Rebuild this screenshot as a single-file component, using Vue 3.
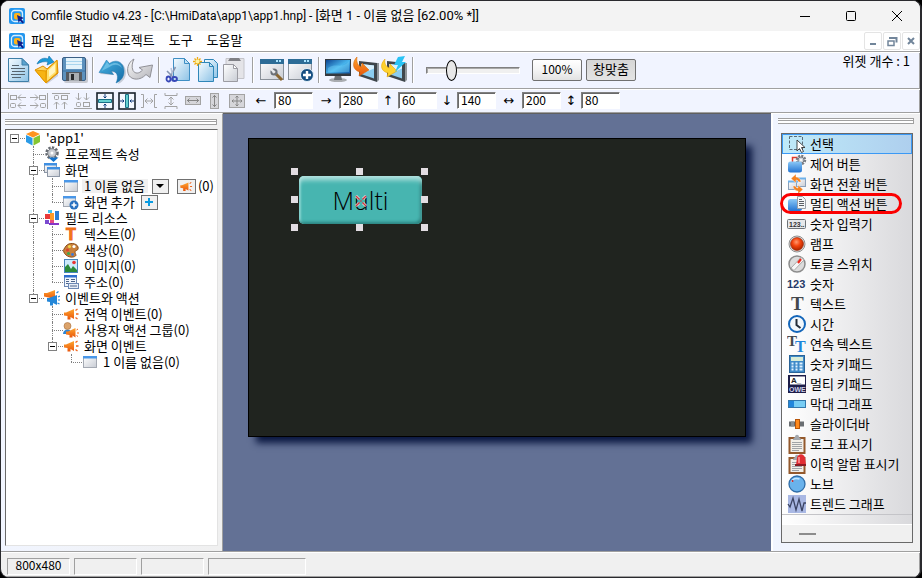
<script setup>
import { ref } from 'vue'

const menus = ['파일', '편집', '프로젝트', '도구', '도움말']

const toolGroups = [
  [['new', '새로 만들기'], ['open', '열기'], ['save', '저장']],
  [['undo', '실행 취소'], ['redo', '다시 실행']],
  [['cut', '잘라내기'], ['copy', '복사'], ['paste', '붙여넣기']],
  [['winset', '화면 속성'], ['winadd', '화면 추가']],
  [['monitor', '시뮬레이션'], ['download', '다운로드'], ['quick', '빠른 다운로드']],
]

const alignTools = [
  ['al-left', '왼쪽 맞춤'], ['al-right', '오른쪽 맞춤'], ['al-top', '위쪽 맞춤'], ['al-bottom', '아래쪽 맞춤'],
  ['al-vc', '세로 가운데'], ['al-hc', '가로 가운데'], ['sp-h', '가로 간격'], ['sp-v', '세로 간격'],
  ['sz-w', '같은 너비'], ['sz-h', '같은 높이'], ['sz-b', '같은 크기'],
]

const fields = ref([
  { id: 'left', mark: '←', wide: true, value: '80' },
  { id: 'right', mark: '→', wide: true, value: '280' },
  { id: 'top', mark: '↑', wide: false, value: '60' },
  { id: 'bottom', mark: '↓', wide: false, value: '140' },
  { id: 'width', mark: '↔', wide: true, value: '200' },
  { id: 'height', mark: '↕', wide: false, value: '80' },
])
const zoom = ref(23)

// Guide cells, left to right: e = empty, v = vertical, t = tee, l = last child, r = root
const tree = [
  { guides: 'r', open: true, icon: 't-cube', text: "'app1'" },
  { guides: 'et', icon: 't-gear', text: '프로젝트 속성' },
  { guides: 'et', open: true, icon: 't-windows', text: '화면' },
  { guides: 'evt', icon: 't-window', text: '1 이름 없음', current: true },
  { guides: 'evl', icon: 't-winadd', text: '화면 추가', add: true },
  { guides: 'et', open: true, icon: 't-blocks', text: '필드 리소스' },
  { guides: 'evt', icon: 't-text', text: '텍스트(0)' },
  { guides: 'evt', icon: 't-palette', text: '색상(0)' },
  { guides: 'evt', icon: 't-image', text: '이미지(0)' },
  { guides: 'evl', icon: 't-address', text: '주소(0)' },
  { guides: 'el', open: true, icon: 't-horns', text: '이벤트와 액션' },
  { guides: 'eet', icon: 't-horn', text: '전역 이벤트(0)' },
  { guides: 'eet', icon: 't-user', text: '사용자 액션 그룹(0)' },
  { guides: 'eel', open: true, icon: 't-horn', text: '화면 이벤트' },
  { guides: 'eeel', icon: 't-window', text: '1 이름 없음(0)' },
]

const widgets = [
  ['w-select', '선택'], ['w-control', '제어 버튼'], ['w-switch', '화면 전환 버튼'], ['w-multi', '멀티 액션 버튼'],
  ['w-numin', '숫자 입력기'], ['w-lamp', '램프'], ['w-toggle', '토글 스위치'], ['w-num', '숫자'],
  ['w-text', '텍스트'], ['w-time', '시간'], ['w-texts', '연속 텍스트'], ['w-keypad', '숫자 키패드'],
  ['w-mkeypad', '멀티 키패드'], ['w-bar', '막대 그래프'], ['w-slider', '슬라이더바'], ['w-log', '로그 표시기'],
  ['w-alarm', '이력 알람 표시기'], ['w-knob', '노브'], ['w-trend', '트렌드 그래프'],
]

// Lettering drawn on top of an icon's shapes
const glyphs = {
  't-text': [{ s: 'T', x: 3, y: 14, size: 16, fill: '#f47a1a', face: 'thick' }],
  'w-numin': [{ s: '123..', x: 2, y: 13, size: 7, fill: '#333', face: 'sans' }],
  'w-num': [{ s: '123', x: 0, y: 14, size: 11, fill: '#263a68', face: 'sans' }],
  'w-text': [{ s: 'T', x: 4, y: 16, size: 19, fill: '#45494e', face: 'serif' }],
  'w-texts': [
    { s: 'T', x: 0, y: 12, size: 15, fill: '#45494e', face: 'serif' },
    { s: 'T', x: 8, y: 18, size: 16, fill: '#1f86da', face: 'serif' },
  ],
  'w-mkeypad': [
    { s: 'A_', x: 4, y: 9, size: 8, fill: '#222', face: 'sans' },
    { s: 'OWE', x: 2, y: 18, size: 7, fill: '#cfd0e8', face: 'sans' },
  ],
}
const selected = ref(0)
const marked = 3

const handles = ['nw', 'n', 'ne', 'w', 'e', 'sw', 's', 'se']
</script>

<template>
  <div class="window">
    <svg class="defs" aria-hidden="true">
      <defs>
        <linearGradient id="gPaper" x1="0" y1="0" x2="1" y2="1"><stop offset="0" stop-color="#f4fbff" /><stop offset="1" stop-color="#8ec3e6" /></linearGradient>
        <linearGradient id="gGray" x1="0" y1="0" x2="1" y2="1"><stop offset="0" stop-color="#fafafa" /><stop offset="1" stop-color="#b4b4ba" /></linearGradient>
        <linearGradient id="gGold" x1="0" y1="0" x2="1" y2="1"><stop offset="0" stop-color="#fff2a0" /><stop offset="1" stop-color="#f4a300" /></linearGradient>
        <linearGradient id="gBlue" x1="0" y1="0" x2="0" y2="1"><stop offset="0" stop-color="#8cc9f7" /><stop offset="1" stop-color="#2474d2" /></linearGradient>
        <linearGradient id="gUndo" x1="0" y1="0" x2="1" y2="1"><stop offset="0" stop-color="#49b4e4" /><stop offset="1" stop-color="#146ba6" /></linearGradient>
        <linearGradient id="gScreen" x1="0" y1="0" x2="1" y2="1"><stop offset="0" stop-color="#0a3f8e" /><stop offset=".5" stop-color="#48b4ec" /><stop offset="1" stop-color="#0a4a9a" /></linearGradient>
        <linearGradient id="gOrange" x1="0" y1="0" x2="0" y2="1"><stop offset="0" stop-color="#ffa52e" /><stop offset="1" stop-color="#e9560c" /></linearGradient>
        <linearGradient id="gLight" x1="0" y1="0" x2="1" y2="1"><stop offset="0" stop-color="#ffffff" /><stop offset="1" stop-color="#c8ccd4" /></linearGradient>
        <radialGradient id="gLamp" cx=".45" cy=".35" r=".6"><stop offset="0" stop-color="#ff9a70" /><stop offset=".5" stop-color="#f4450f" /><stop offset="1" stop-color="#b42800" /></radialGradient>
      </defs>

      <symbol id="logo" viewBox="0 0 16 16">
        <rect width="16" height="16" rx="2" fill="#2497ee" />
        <rect x="2.500" y="2.500" width="11" height="11" rx="3" fill="none" stroke="#d8efff" stroke-width="1.300" />
        <rect x="5" y="5" width="6.500" height="6.500" rx="2" fill="#ffb21a" />
        <path d="M8 7l7 3-2.600 1.200 2.600 3-1.300 1.300-2.800-2.800L9.600 15z" fill="#10208c" />
      </symbol>

      <symbol id="new" viewBox="0 0 28 28">
        <path d="M6 4h14l6 6v17H6z" fill="#9aa6b4" opacity=".35" />
        <path d="M4.500 2.500h13.500l6.500 6.500v16.500h-20z" fill="url(#gPaper)" stroke="#3f7fa8" />
        <path d="M18 2.500V9h6.500z" fill="#5ba4d0" stroke="#3f7fa8" />
        <path d="M8 9.500h7M7 12.500h14M8 15.500h13M7 18.500h14M8 21.500h9" stroke="#56646e" />
      </symbol>
      <symbol id="open" viewBox="0 0 28 28">
        <path d="M5 17l10 11 11-8V7z" fill="#8a8f9a" opacity=".35" />
        <path d="M3 14l8-4 4 3 10-9 1 13-12 10z" fill="url(#gGold)" stroke="#d98a00" />
        <path d="M14.500 14L25 4.500V17l-11 9.500z" fill="#ffdf6a" stroke="#e59a00" />
        <path d="M17 14l6-6v8l-6 5z" fill="#fff6c4" />
        <path d="M3 14l11 1v12z" fill="#f7b414" stroke="#e59a00" />
        <path d="M5 8c2-5 7-7 11-5l1-3 5 6-7 3 1-3c-4-1-7 0-11 2z" fill="#1b9ad8" stroke="#0f6ea8" stroke-width=".6" />
      </symbol>
      <symbol id="save" viewBox="0 0 28 28">
        <rect x="4" y="3" width="24" height="24" rx="2" fill="#888" opacity=".4" />
        <rect x="2.500" y="1.500" width="23" height="23" rx="1.500" fill="#5d91bd" stroke="#3a5f85" />
        <rect x="6" y="2" width="16" height="11" fill="#e4f3fb" /><path d="M6 5.500h16M6 8.500h16" stroke="#a9d5ee" />
        <rect x="3" y="14" width="22" height="2" fill="#4b82b2" />
        <rect x="6" y="16" width="16" height="9" fill="#55595f" /><rect x="9" y="17" width="10" height="8" fill="#a9adb2" /><rect x="11" y="18" width="3" height="6" fill="#26282c" />
      </symbol>
      <symbol id="undo" viewBox="0 0 28 28">
        <path d="M2 18l8-12 3 2.500c8-5 15 0 15 8 0 6-4 10-8 11.500 3-7 0-12-6-12l2 3z" fill="#7a8490" opacity=".35" />
        <path d="M1 16.500L8.500 4l3 3.500C19 2 26.500 7 26 16c0 5-3.500 9-8 11 3-6 1.500-12-5-12l2.500 3.500z" fill="url(#gUndo)" stroke="#1c74ac" stroke-width=".5" />
        <path d="M9 6l2.500 3C17 5.500 22 7 24 12c-4-4-8-4-12.500-1L3.500 15z" fill="#9adcf6" opacity=".5" />
      </symbol>
      <symbol id="redo" viewBox="0 0 28 28">
        <path d="M8 3C2 6 0 14 3 19.500c3 4.500 11 5.500 17-1l4 3L26.500 9 13 11.500l3.500 2.500C13 18 9 18 7 14.500 5.500 11 6 7 8 3z" fill="url(#gGray)" stroke="#909096" />
      </symbol>
      <symbol id="cut" viewBox="0 0 28 28">
        <path d="M9.500 2.500h11l5 5v17h-16z" fill="url(#gPaper)" stroke="#3f8fc4" /><path d="M20.500 2.500v5h5z" fill="#c2e2f5" stroke="#3f8fc4" />
        <path d="M11.500 11l-6 11M3 15l7 7" stroke="#8696b2" stroke-width="1.600" /><path d="M7 12l1.500 6" stroke="#b8c6dc" stroke-width="1.500" />
        <ellipse cx="4.500" cy="23" rx="2" ry="2.500" fill="none" stroke="#3848b8" stroke-width="1.800" /><ellipse cx="10.500" cy="23" rx="2.500" ry="2" fill="none" stroke="#3848b8" stroke-width="1.800" />
      </symbol>
      <symbol id="copy" viewBox="0 0 28 28">
        <path d="M12.500 3.500h9l4 4v14h-13z" fill="url(#gPaper)" stroke="#2f86b8" />
        <path d="M6.500 6.500h11l4 4v15h-15z" fill="url(#gPaper)" stroke="#2f86b8" /><path d="M17.500 6.500v4h4z" fill="#c2e2f5" stroke="#2f86b8" />
        <path d="M5.500 1v9M1 5.500h9M2.500 2.500l6 6M8.500 2.500l-6 6" stroke="#f0ab10" stroke-width="1.300" /><circle cx="5.500" cy="5.500" r="2" fill="#fff3a0" />
      </symbol>
      <symbol id="paste" viewBox="0 0 28 28">
        <path d="M6 2.500h18v20H6z" fill="#e4e4e8" stroke="#c4c4ca" /><path d="M8 5l2-3h9l2 3z" fill="#808086" />
        <path d="M3.500 8.500h10l4 4v13h-14z" fill="url(#gLight)" stroke="#9b9ba2" /><path d="M13.500 8.500v4h4z" fill="#fff" stroke="#9b9ba2" />
      </symbol>
      <symbol id="winset" viewBox="0 0 28 28">
        <rect x="2.500" y="3.500" width="23" height="20" fill="url(#gLight)" stroke="#8a9199" /><rect x="2" y="3" width="24" height="5" fill="#2d6c96" /><path d="M18 5h2M21 5h2" stroke="#a9e3ff" stroke-width="2" />
        <path d="M17 17l7 7" stroke="#8a6630" stroke-width="3" /><circle cx="16" cy="16" r="2.600" fill="none" stroke="#6b7178" stroke-width="2" /><path d="M12.500 12.500L16 16" stroke="#e9ebee" stroke-width="2.400" />
      </symbol>
      <symbol id="winadd" viewBox="0 0 28 28">
        <rect x="2.500" y="3.500" width="23" height="20" fill="url(#gLight)" stroke="#8a9199" /><rect x="2" y="3" width="24" height="5" fill="#2d6c96" /><path d="M18 5h2M21 5h2" stroke="#a9e3ff" stroke-width="2" />
        <circle cx="21" cy="19" r="6.500" fill="#164f82" stroke="#e8f3fa" /><path d="M21 15v8M17 19h8" stroke="#fff" stroke-width="2.400" />
      </symbol>
      <symbol id="monitor" viewBox="0 0 28 28">
        <ellipse cx="14" cy="24" rx="9" ry="2" fill="#a9acb0" /><path d="M11 19h6l1 5h-8z" fill="#6d7176" />
        <rect x="1.500" y="3.500" width="25" height="16" fill="url(#gScreen)" stroke="#34393f" />
        <path d="M2 18.500h24" stroke="#34393f" stroke-width="2" /><path d="M4 12c8-6 14 2 21-7v11H4z" fill="#7ddcff" opacity=".35" />
      </symbol>
      <symbol id="screenTilt" viewBox="0 0 28 28">
        <path d="M7 5l18 2v19L7 20z" fill="#3f464c" /><path d="M25 7l2 0v17l-2 2z" fill="#90969b" />
        <path d="M9 8l13 1.500v13L9 18z" fill="#8ccdf0" /><path d="M9 8l13 1.500v3L9 18z" fill="#d9f1ff" />
      </symbol>
      <symbol id="download" viewBox="0 0 28 28">
        <use href="#screenTilt" />
        <path d="M5 1c-5 5-5 13 3 15l-1 4 10-6-7-7-.5 4C6 10 4 6 5 1z" fill="url(#gOrange)" stroke="#d96a0a" stroke-width=".6" />
      </symbol>
      <symbol id="quick" viewBox="0 0 28 28">
        <use href="#screenTilt" />
        <path d="M5 3c-5 5-5 12 3 14l-1 4 10-6-7-7-.500 4C6 11 4 7 5 3z" fill="#ffd22e" stroke="#e9a80a" stroke-width=".6" />
        <path d="M18 1l7-1-3 6h4L15 16l3-7h-4z" fill="#29c3f5" />
      </symbol>

      <symbol id="al-left" viewBox="0 0 20 20"><path d="M1.500 2v16M19 6.500h-8M14 3.500l-3 3 3 3M19 14.500h-8M14 11.500l-3 3 3 3" /><rect x="3.500" y="4.500" width="6" height="4" /><rect x="3.500" y="12.500" width="5" height="4" rx="1" /></symbol>
      <symbol id="al-right" viewBox="0 0 20 20"><path d="M18.500 2v16M1 6.500h8M6 3.500l3 3-3 3M1 14.500h8M6 11.500l3 3-3 3" /><rect x="10.500" y="4.500" width="6" height="4" /><rect x="11.500" y="12.500" width="5" height="4" rx="1" /></symbol>
      <symbol id="al-top" viewBox="0 0 20 20"><path d="M1 2.500h18M5.500 18v-7M3 13.500L5.500 11 8 13.500M13.500 18v-7M11 13.500l2.500-2.500 2.500 2.500" /><rect x="3.500" y="4.500" width="4" height="4" rx="1" /><rect x="10.500" y="4.500" width="6" height="4" /></symbol>
      <symbol id="al-bottom" viewBox="0 0 20 20"><path d="M1 17.500h18M5.500 2v7M3 6.500L5.500 9 8 6.500M13.500 2v7M11 6.500L13.500 9 16 6.500" /><rect x="3.500" y="11.500" width="4" height="4" rx="1" /><rect x="10.500" y="11.500" width="6" height="4" /></symbol>
      <symbol id="al-vc" viewBox="0 0 20 20"><rect x="2" y="2" width="16" height="16" fill="#f4f8ff" stroke="#18222c" stroke-width="1.600" /><path d="M3.500 8.500h13v3h-13z" fill="#65d0d0" stroke="#1a6f86" /><path d="M10 3v4M8.500 5.500L10 7l1.500-1.500M10 17v-4M8.500 14.500L10 13l1.500 1.500" stroke="#123c7c" /></symbol>
      <symbol id="al-hc" viewBox="0 0 20 20"><rect x="2" y="2" width="16" height="16" fill="#f4f8ff" stroke="#18222c" stroke-width="1.600" /><path d="M8.500 3.500h3v13h-3z" fill="#65d0d0" stroke="#1a6f86" /><path d="M3 10h4M5.500 8.500L7 10l-1.500 1.500M17 10h-4M14.500 8.500L13 10l1.500 1.500" stroke="#123c7c" /></symbol>
      <symbol id="sp-h" viewBox="0 0 20 20"><path d="M2 3.500h2.500v13H2M18 3.500h-2.500v13H18M6 10h8M8.500 7.500L6 10l2.500 2.500M11.500 7.500L14 10l-2.500 2.500" /></symbol>
      <symbol id="sp-v" viewBox="0 0 20 20"><path d="M4 2v2.500h12V2M4 18v-2.500h12V18M10 6v8M7.500 8.500L10 6l2.500 2.500M7.500 11.500L10 14l2.500-2.500" /></symbol>
      <symbol id="sz-w" viewBox="0 0 20 20"><rect x="2.500" y="5.500" width="15" height="8" fill="#d6d6da" /><path d="M4 9.500h12M6.500 7.500l-2 2 2 2M13.500 7.500l2 2-2 2" stroke="#858585" /></symbol>
      <symbol id="sz-h" viewBox="0 0 20 20"><rect x="5.500" y="2.500" width="8" height="15" fill="#d6d6da" /><path d="M9.500 4v12M7.500 6.500l2-2 2 2M7.500 13.500l2 2 2-2" stroke="#858585" /></symbol>
      <symbol id="sz-b" viewBox="0 0 20 20"><rect x="2.500" y="3.500" width="15" height="13" fill="#d6d6da" /><path d="M10 5v10M8.500 6.500L10 5l1.500 1.500M8.500 13.500L10 15l1.500-1.500M5 10h10M6.500 8.500L5 10l1.500 1.500M13.500 8.500L15 10l-1.500 1.500" stroke="#858585" /></symbol>

      <symbol id="t-cube" viewBox="0 0 16 16"><path d="M8 1l7 3-7 3.500L1 4z" fill="#ff9420" /><path d="M1 5l6.500 3v7.500L1 12z" fill="#2b9be6" /><path d="M15 5L8.500 8v7.500L15 12z" fill="#86c632" /></symbol>
      <symbol id="t-gear" viewBox="0 0 16 16"><circle cx="8" cy="7" r="5.500" fill="none" stroke="#666b72" stroke-width="2.500" stroke-dasharray="2.300 1.300" /><circle cx="8" cy="7" r="4.300" fill="#c9ccd1" stroke="#7a7e84" /><circle cx="8" cy="7" r="1.500" fill="#fff" /><path d="M4.500 11.500h10l-5 4.500z" fill="#1272cc" /></symbol>
      <symbol id="t-window" viewBox="0 0 16 16"><rect x="1.500" y="2.500" width="13" height="11" fill="url(#gLight)" stroke="#a4a9b2" /><rect x="1" y="2" width="14" height="2.500" fill="#4a97e8" /></symbol>
      <symbol id="t-windows" viewBox="0 0 16 16"><rect x=".5" y="1.500" width="12" height="9" fill="url(#gLight)" stroke="#8d97a6" /><rect x="0" y="1" width="13" height="2.500" fill="#3f8fe2" /><rect x="3.500" y="5.500" width="12" height="9" fill="url(#gLight)" stroke="#8d97a6" /><rect x="3" y="5" width="13" height="2.500" fill="#3f8fe2" /></symbol>
      <symbol id="t-winadd" viewBox="0 0 16 16"><rect x=".5" y="2.500" width="12" height="10" fill="url(#gLight)" stroke="#a4a9b2" /><rect x="0" y="2" width="13" height="2.500" fill="#4a97e8" /><circle cx="11" cy="11" r="4.500" fill="#2870c0" /><path d="M11 8.500v5M8.500 11h5" stroke="#fff" stroke-width="1.600" /></symbol>
      <symbol id="t-blocks" viewBox="0 0 16 16"><rect x="4" y="0" width="4" height="3" fill="#43c4f2" /><rect x="1" y="4" width="5" height="5" fill="#e83a3a" /><rect x="6" y="3" width="4" height="7" fill="#ff9b2a" /><rect x="11" y="1" width="4" height="9" fill="#2c7fd6" /><rect x="1" y="10" width="4" height="4" fill="#7a4ad0" /><rect x="6" y="10" width="4" height="3" fill="#e64a86" /><rect x="5" y="13" width="10" height="2" fill="#8436c8" /></symbol>
      <symbol id="t-palette" viewBox="0 0 16 16"><path d="M3 4c3-4 11-3 12 1s-3 3-3 5 3 4-2 5S-1 11 1 7z" fill="#c9803c" stroke="#8c4e1a" /><circle cx="4.500" cy="8" r="1.500" fill="#e04030" /><circle cx="6.500" cy="4.500" r="1.500" fill="#f3d84a" /><circle cx="11" cy="4.500" r="1.600" fill="#fff" /><circle cx="5.500" cy="11.500" r="1.500" fill="#3fa64c" /><circle cx="9.500" cy="12.500" r="1.400" fill="#3c78d8" /></symbol>
      <symbol id="t-image" viewBox="0 0 16 16"><rect x="1.500" y="1.500" width="13" height="13" fill="#cdeafc" stroke="#4886bc" /><path d="M2 14V9l3-3 3 5 2-3 4 4v2z" fill="#2c8a3a" /><circle cx="11" cy="4.500" r="1.800" fill="#e83434" /></symbol>
      <symbol id="t-address" viewBox="0 0 16 16"><rect x="1.500" y="1.500" width="12" height="11" fill="#f2f6fb" stroke="#6c88b4" /><rect x="1" y="1" width="13" height="2.500" fill="#2f6ed0" /><path d="M3 5.500h3M8 5.500h4M3 7.500h3M8 7.500h4M3 9.500h3" stroke="#4c648c" /><rect x="5.500" y="9.500" width="10" height="5" fill="#e6edf7" stroke="#6c88b4" /><path d="M7 12h7" stroke="#4c648c" /></symbol>
      <symbol id="t-horn" viewBox="0 0 16 16"><path d="M1 6.500h2L11 3v10l-3.500-2v2.500h-3V10L1 9.500z" fill="url(#gOrange)" /><path d="M12.500 4.500l2-1.500M13 8h2.500M12.500 11.500l2 1.500" stroke="#f0641a" stroke-width="1.300" /></symbol>
      <symbol id="t-horns" viewBox="0 0 16 16"><path d="M0 3h3l8-3v9L0 6.500z" fill="url(#gOrange)" /><path d="M3 8h2l8-3v10l-4-2v2.500H6V12l-3-.500z" fill="#2487d8" /><path d="M12.500 3l2-1.500M14 7l2-1M14 10h2M13.500 13l2 1" stroke="#2487d8" stroke-width="1.200" /></symbol>
      <symbol id="t-user" viewBox="0 0 16 16"><path d="M0 12c0-6 9-6 9 0z" fill="#2d85d4" /><circle cx="4.500" cy="4" r="3.500" fill="#dca36a" stroke="#a8713c" stroke-width=".6" /><path d="M3 9.500h2L12.500 6v9.500l-3-2v2H6.500V13L3 12.500z" fill="url(#gOrange)" /><path d="M13.500 8l1.500-1M14 11h2M13.500 13.500l1.500 1" stroke="#f0641a" /></symbol>

      <symbol id="w-select" viewBox="0 0 20 20"><rect x="2.500" y="2.500" width="13" height="13" fill="none" stroke="#5a6a76" stroke-dasharray="3 1.500" /><path d="M10 6v11l2.500-2.500 2 4 2-1-2-4H18z" fill="#fff" stroke="#333" stroke-width=".9" /></symbol>
      <symbol id="w-control" viewBox="0 0 20 20"><path d="M5.500 8V3.500h5" fill="none" stroke="#e03a2a" stroke-width="1.500" /><circle cx="14" cy="6" r="4" fill="none" stroke="#777b82" stroke-width="2.500" stroke-dasharray="2 1.100" /><circle cx="14" cy="6" r="3" fill="#cfd2d6" stroke="#777b82" /><circle cx="14" cy="6" r="1" fill="#fff" /><rect x="1" y="7.500" width="14" height="11" rx="2.500" fill="url(#gBlue)" /></symbol>
      <symbol id="w-switch" viewBox="0 0 20 20"><rect x="1.500" y="7.500" width="10" height="8" fill="url(#gLight)" stroke="#8aa0ba" /><rect x="9.500" y="4.500" width="9" height="8" fill="url(#gLight)" stroke="#8aa0ba" /><path d="M1 7.500h10M10 4.500h9" stroke="#6eb1ea" stroke-width="2" /><path d="M14 8c0-3-3-5-5-5V0L4 4.500 9 9V6c1.500 0 2.500 1 2.500 2zM6 12c0 3 3 5 5 5v3l5-4.500L11 11v3c-1.500 0-2.500-1-2.500-2z" fill="#f4811f" stroke="#fff" stroke-width=".4" /></symbol>
      <symbol id="w-multi" viewBox="0 0 20 20"><rect x="1" y="5" width="14" height="12" rx="2.500" fill="url(#gBlue)" /><path d="M10.500 2.500h5l3 3v9h-8z" fill="#f4f6f8" stroke="#9aa0a8" /><path d="M12 5.500h3M12 7.500h5M12 9.500h5M12 11.500h5" stroke="#5c6066" /></symbol>
      <symbol id="w-numin" viewBox="0 0 20 20"><rect x=".5" y="5.500" width="18" height="9" rx="1" fill="#e6e8ea" stroke="#6e7378" /></symbol>
      <symbol id="w-lamp" viewBox="0 0 20 20"><circle cx="10" cy="10" r="8" fill="#e3e3e3" stroke="#909090" /><circle cx="10" cy="10" r="6.500" fill="url(#gLamp)" stroke="#8e2a10" stroke-width=".6" /></symbol>
      <symbol id="w-toggle" viewBox="0 0 20 20"><circle cx="10" cy="10" r="8" fill="#dcdcdc" stroke="#8c8c8c" stroke-width="1.500" /><path d="M14 3.500L17 6 7 16.500 4 14z" fill="#f6f6f6" stroke="#aaa" /><path d="M11 9l3-4" stroke="#ee2a1c" stroke-width="2.200" /></symbol>
      <symbol id="w-time" viewBox="0 0 20 20"><circle cx="10" cy="10" r="8" fill="#f2f7fb" stroke="#1466ba" stroke-width="2" /><path d="M9.500 5v6l4 3" fill="none" stroke="#222c38" stroke-width="2" /></symbol>
      <symbol id="w-keypad" viewBox="0 0 20 20"><rect x="2.500" y="1.500" width="15" height="17" fill="#3f8ac8" stroke="#2a6397" /><rect x="4" y="3" width="12" height="4" fill="#d9ecd8" /><path d="M4.500 9.500h2M8.500 9.500h2M12.500 9.500h3M4.500 12.500h2M8.500 12.500h2M12.500 12.500h3M4.500 15.500h2M8.500 15.500h2M12.500 15.500h3" stroke="#dff1ff" stroke-width="2" /></symbol>
      <symbol id="w-mkeypad" viewBox="0 0 20 20"><rect x="1" y="1" width="18" height="18" fill="#1d1d48" /><rect x="3" y="2.500" width="15" height="8" fill="#fff" /></symbol>
      <symbol id="w-bar" viewBox="0 0 20 20"><rect x="1.500" y="6.500" width="17" height="7" fill="#78cdf4" stroke="#3478ac" /><rect x="2" y="7" width="5" height="6" fill="#2286dc" /></symbol>
      <symbol id="w-slider" viewBox="0 0 20 20"><rect x="2" y="7.500" width="15" height="5" fill="#6a6e72" /><rect x="4" y="7.500" width="3" height="5" fill="#8b8f93" /><rect x="8.500" y="5.500" width="4" height="9" fill="#ff8a1e" stroke="#b8560a" /></symbol>
      <symbol id="w-log" viewBox="0 0 20 20"><rect x="2.500" y="4" width="15" height="15" fill="#f2efe9" stroke="#94592c" stroke-width="2" /><path d="M6 5l2-2c0-3 4-3 4 0l2 2v1H6z" fill="#a4a8ad" /><path d="M5 8.500h10M5 10.500h10M5 12.500h10M5 14.500h10M5 16.500h7" stroke="#8b9096" stroke-width=".8" /></symbol>
      <symbol id="w-alarm" viewBox="0 0 20 20"><use href="#w-log" /><path d="M9 11l1-7c1-5 7-5 8 0l1 7z" fill="#e22d33" /><path d="M12 3v6" stroke="#ff9a9a" stroke-width="1.500" /><rect x="8" y="10" width="11" height="2" fill="#8b1b22" /></symbol>
      <symbol id="w-knob" viewBox="0 0 20 20"><circle cx="10" cy="10" r="8" fill="#69b2ec" stroke="#2f6da8" stroke-width="1.300" /><path d="M4.500 8c1-3 4-4.500 8-3" stroke="#c4e6ff" fill="none" stroke-width="1.500" /><circle cx="5.500" cy="7" r="1" fill="#c22" /></symbol>
      <symbol id="w-trend" viewBox="0 0 20 20"><rect x="1" y="1" width="18" height="18" fill="#a9b8e4" /><path d="M1 10l2 3 3-9 3 12 3-11 3 12 2-8h2" fill="none" stroke="#3b4464" stroke-width="1.300" /></symbol>
    </svg>

    <header class="titlebar">
      <svg class="i16"><use href="#logo" /></svg>
      <h1>Comfile Studio v4.23 - [C:\HmiData\app1\app1.hnp] - <span class="doc">[화면 1 - 이름 없음 [62.00% *]]</span></h1>
      <div class="caption">
        <button aria-label="최소화"><svg viewBox="0 0 12 12"><path d="M1 6.500h10" /></svg></button>
        <button aria-label="최대화"><svg viewBox="0 0 12 12"><rect x="1.500" y="1.500" width="9" height="9" rx="1" /></svg></button>
        <button aria-label="닫기"><svg viewBox="0 0 12 12"><path d="M1 1l10 10M11 1L1 11" /></svg></button>
      </div>
    </header>

    <nav class="menubar">
      <svg class="i16"><use href="#logo" /></svg>
      <button v-for="m in menus" :key="m" class="menu">{{ m }}</button>
      <div class="child-caption">
        <button aria-label="창 최소화"><svg viewBox="0 0 12 12"><path d="M3 9h6" /></svg></button>
        <button aria-label="창 복원"><svg viewBox="0 0 12 12"><path d="M4 3h6.500v4.500M4 2v2" /><rect x="2" y="6" width="6" height="4.500" stroke-width="1.500" /></svg></button>
        <button aria-label="창 닫기"><svg viewBox="0 0 12 12"><path d="M3 3l6 6M9 3L3 9" /></svg></button>
      </div>
    </nav>

    <div class="toolbar">
      <template v-for="(g, gi) in toolGroups" :key="gi">
        <button v-for="t in g" :key="t[0]" class="tool" :aria-label="t[1]"><svg><use :href="'#' + t[0]" /></svg></button>
        <span class="sep"></span>
      </template>
      <input v-model="zoom" class="zoom" type="range" min="0" max="100" aria-label="확대 비율">
      <button class="push">100%</button>
      <button class="push on">창맞춤</button>
      <p class="count">위젯 개수 : 1</p>
    </div>

    <div class="alignbar">
      <button v-for="a in alignTools" :key="a[0]" class="align" :aria-label="a[1]"><svg><use :href="'#' + a[0]" /></svg></button>
      <template v-for="f in fields" :key="f.id">
        <label :for="f.id" :class="{ wide: f.wide }">{{ f.mark }}</label>
        <input :id="f.id" v-model="f.value" type="text">
      </template>
    </div>

    <main>
      <aside class="left">
        <div class="grip"></div>
        <ul class="tree">
          <li v-for="(n, i) in tree" :key="i">
            <span v-for="(c, k) in n.guides" :key="k" class="guide" :class="'g-' + c">
              <button v-if="n.open && k === n.guides.length - 1" class="expander" :aria-label="n.text + ' 접기'"></button>
            </span>
            <svg class="i16" viewBox="0 0 16 16">
              <use :href="'#' + n.icon" />
              <text v-for="(g, gi) in glyphs[n.icon]" :key="gi" :class="g.face" :x="g.x" :y="g.y" :font-size="g.size" :fill="g.fill">{{ g.s }}</text>
            </svg>
            <span class="node" :class="{ current: n.current }">{{ n.text }}</span>
            <template v-if="n.current">
              <button class="mini" aria-label="화면 메뉴"><svg viewBox="0 0 12 12"><path d="M2 4h8L6 8z" fill="#000" /></svg></button>
              <button class="mini horn" aria-label="화면 이벤트"><svg viewBox="0 0 16 16"><use href="#t-horn" /></svg></button>
              <span class="tail">(0)</span>
            </template>
            <button v-if="n.add" class="mini" aria-label="화면 추가"><svg viewBox="0 0 12 12"><path d="M6 2v8M2 6h8" stroke="#0a9be0" stroke-width="2" /></svg></button>
          </li>
        </ul>
      </aside>

      <section class="workspace">
        <div class="screen">
          <div class="widget">
            <span>Multi</span>
            <svg class="center" viewBox="0 0 12 12"><path d="M1 1l3 3M11 1L8 4M1 11l3-3M11 11L8 8" stroke="#fff" stroke-width="2.500" /><path d="M1 1l3.500 3.500M11 1L7.500 4.500M1 11l3.500-3.500M11 11L7.500 7.500" stroke="#c83c46" stroke-width="1.600" /><path d="M5 6h2" stroke="#c83c46" /></svg>
            <i v-for="h in handles" :key="h" class="handle" :class="h"></i>
          </div>
        </div>
      </section>

      <aside class="right">
        <div class="grip"></div>
        <div class="palette">
          <ul>
            <li v-for="(w, i) in widgets" :key="w[0]">
              <button :class="{ selected: i === selected, marked: i === marked }" @click="selected = i">
                <svg viewBox="0 0 20 20">
                  <use :href="'#' + w[0]" />
                  <text v-for="(g, gi) in glyphs[w[0]]" :key="gi" :class="g.face" :x="g.x" :y="g.y" :font-size="g.size" :fill="g.fill">{{ g.s }}</text>
                </svg>
                <span>{{ w[1] }}</span>
              </button>
            </li>
          </ul>
          <div class="ledge"></div>
          <div class="foot"><span></span></div>
        </div>
      </aside>
    </main>

    <footer>
      <span class="cell">800x480</span>
      <span class="cell"></span>
      <span class="cell"></span>
      <span class="cell long"></span>
    </footer>
  </div>
</template>

<style>
body { background: #000; }
</style>

<style scoped>
*, *::before, *::after { box-sizing: border-box; }
.window {
  display: flex;
  flex-direction: column;
  min-height: 100vh;
  border: 1px solid #2a2a2e;
  border-right-width: 2px;
  border-radius: 9px;
  overflow: hidden;
  background: #f0f0f0;
  color: #000;
  font: 13px/16px "Noto Sans CJK KR", sans-serif;
}
.defs { position: absolute; width: 0; height: 0; }
button { border: 0; padding: 0; background: none; font: inherit; color: inherit; }
ul { list-style: none; margin: 0; padding: 0; }
svg { display: block; flex: none; }
.i16 { width: 16px; height: 16px; }
.sans { font-family: "Liberation Sans", sans-serif; font-weight: 700; }
.serif { font-family: "Liberation Serif", serif; font-weight: 700; }
.thick { font-family: "Liberation Sans", sans-serif; font-weight: 700; stroke: #f06a14; stroke-width: 1; }

.titlebar { display: flex; align-items: center; height: 30px; padding-left: 8px; background: #f3f3f3; }
.titlebar h1 { margin: 0 0 0 6px; flex: 1; font: 400 12px/16px Roboto, "Noto Sans CJK KR", sans-serif; white-space: nowrap; }
.titlebar .doc { font-size: 13px; }
.caption { display: flex; }
.caption button { display: flex; justify-content: center; align-items: center; width: 46px; height: 30px; }
.caption svg { width: 12px; height: 12px; fill: none; stroke: #000; }

.menubar { display: flex; align-items: center; height: 20px; padding-left: 8px; background: #fff; }
.menubar .menu { margin-right: 6px; padding: 0 4px 2px; line-height: 18px; }
.menubar .i16 { margin-right: 2px; }
.child-caption { display: flex; gap: 1px; margin-left: auto; }
.child-caption button { width: 18px; height: 18px; padding: 2px; border: 1px solid #e4e4e4; border-radius: 2px; }
.child-caption svg { width: 12px; height: 12px; fill: none; stroke: #71859a; stroke-width: 2; }

.toolbar, .alignbar { display: flex; align-items: center; background: #f1f4ff; border-top: 1px solid #a0a0a0; box-shadow: inset 0 1px #fff, inset -1px 0 #a0a0a0; }
.toolbar { height: 37px; padding-left: 3px; }
.tool, .tool svg { width: 28px; height: 28px; }
.sep { width: 2px; height: 26px; margin: 0 4px; border-left: 1px solid #a0a0a0; border-right: 1px solid #fff; }
.zoom { appearance: none; width: 94px; height: 22px; margin: 0 12px 0 8px; background: none; }
.zoom::-webkit-slider-runnable-track { height: 7px; border: 1px solid; border-color: #808080 #fff #fff #808080; box-shadow: inset 1px 1px #a8a8a8; background: #f0f0f0; }
.zoom::-webkit-slider-thumb { appearance: none; width: 11px; height: 21px; margin-top: -8px; border: 1px solid #000; border-radius: 50%; background: #e8e8e8; }
.push { width: 50px; height: 22px; margin-right: 4px; padding-bottom: 2px; border: 1px solid #707070; border-radius: 2px; background: linear-gradient(#fff, #f4f4f4 50%, #e2e2e2); font-size: 12px; line-height: 18px; }
.push.on { background: linear-gradient(#d6d6d6, #e4e4e4); font-size: 13px; }
.count { align-self: flex-start; margin: 1px 10px 0 auto; }

.alignbar { height: 25px; padding-left: 5px; border-bottom: 1px solid #a0a0a0; }
.align { width: 22px; height: 20px; }
.align svg { width: 20px; height: 20px; margin: 0 auto; fill: none; stroke: #a3a3a3; stroke-width: 1; }
.alignbar label { width: 20px; text-align: center; font: 13px/18px "DejaVu Sans", sans-serif; }
.alignbar label.wide { width: 26px; }
.alignbar input { width: 39px; height: 17px; padding: 0 3px 2px; border: 1px solid; border-color: #808080 #fff #fff #808080; box-shadow: inset 1px 1px #696969; background: #fff; font: inherit; font-size: 12px; border-radius: 0; }

main { display: flex; flex: 1; }
.left, .right { display: flex; flex-direction: column; border-top: 1px solid #fff; background: linear-gradient(90deg, #f1f5ff, #f0f0f0); }
.left { width: 222px; padding: 5px 4px; border-right: 1px solid #a0a0a0; }
.grip { flex: none; height: 6px; margin-right: 1px; border: 1px solid #a0a0a0; border-left: 0; background: linear-gradient(#fff 1px, #a0a0a0 1px 2px, #fff 2px 4px); }
.tree { flex: 1; margin-top: 4px; border: 1px solid; border-color: #696969 #e3e3e3 #e3e3e3 #696969; background: #fff; }
.tree li { display: flex; align-items: center; height: 16px; }
.guide { position: relative; flex: none; width: 19px; height: 16px; }
.g-v::before, .g-t::before, .g-l::before { content: ""; position: absolute; left: 8px; top: 0; height: 16px; border-left: 1px dotted #808080; }
.g-l::before { height: 8px; }
.g-t::after, .g-l::after, .g-r::after { content: ""; position: absolute; left: 8px; right: 0; top: 8px; border-top: 1px dotted #808080; }
.expander { position: absolute; z-index: 1; left: 4px; top: 4px; width: 9px; height: 9px; border: 1px solid #808080; background: linear-gradient(#000, #000) center / 5px 1px no-repeat #fff; }
.node { margin-left: 3px; padding: 0 2px; line-height: 14px; white-space: nowrap; }
.node.current { background: #f0f0f0; padding-right: 3px; }
.mini { display: flex; justify-content: center; align-items: center; width: 17px; height: 15px; margin-left: 4px; border: 1px solid #707070; background: #f0f0f0; }
.mini svg { width: 12px; height: 12px; }
.mini.horn { width: 19px; margin-left: 8px; }
.mini.horn svg { width: 16px; height: 13px; }
.tail { margin-left: 2px; line-height: 14px; }

.workspace { flex: 1; padding: 24px 25px 0; background: #637195; border-top: 1px solid #606060; }
.screen { position: relative; aspect-ratio: 498 / 299; border: 1px solid #000; background: #20241f; box-shadow: 7px 7px 7px -1px #0a1740; }
.widget { position: absolute; left: 50px; top: 37px; display: flex; justify-content: center; align-items: center; width: 123px; height: 48px; border-radius: 5px; background: #47b5b0; box-shadow: inset 0 6px 5px -2px #b4e2df, inset -2px -2px 3px #2b8480, inset 2px 0 2px #7fd0cc; font: 300 25px/32px "Open Sans", sans-serif; }
.center { position: absolute; left: 56px; top: 19px; width: 12px; height: 12px; fill: none; }
.handle { position: absolute; width: 7px; height: 7px; background: #e2dde2; }
.nw, .w, .sw { left: -8px; }
.n, .s { left: 57px; }
.ne, .e, .se { right: -6px; }
.nw, .n, .ne { top: -8px; }
.w, .e { top: 20px; }
.sw, .s, .se { bottom: -7px; }

.right { width: 149px; padding: 4px 6px 8px 5px; border-left: 2px solid #fff; }
.right .grip { margin-right: 0; }
.palette { flex: 1; display: flex; flex-direction: column; margin: 9px 1px 0 3px; border: 1px solid #696969; background: linear-gradient(90deg, #fff, #d9d9dc); }
.palette button { position: relative; display: flex; align-items: center; gap: 3px; width: 100%; height: 20px; padding-left: 5px; line-height: 18px; white-space: nowrap; text-align: left; }
.palette button svg { width: 20px; height: 20px; }
.palette .selected { background: linear-gradient(90deg, #bfeaf9, #aecfee); border: 1px solid #3b99f5; padding-left: 4px; }
.marked::after { content: ""; position: absolute; left: -2px; top: -1px; width: 122px; height: 21px; border: 3px solid #fb0000; border-radius: 11px; }
.ledge { height: 10px; border-top: 1px solid #c4c4c8; }
.foot { flex: 1; display: flex; align-items: center; padding-left: 17px; border-top: 1px solid #fff; background: #f0f0f0; }
.foot span { width: 17px; height: 2px; background: #8c8c8c; }

footer { display: flex; align-items: flex-start; gap: 4px; height: 26px; padding: 6px 6px 0; border-top: 1px solid #a0a0a0; box-shadow: inset 0 1px #fff, inset -1px 0 #a0a0a0, inset 0 -1px #a0a0a0; }
.cell { width: 63px; height: 17px; border: 1px solid; border-color: #a0a0a0 #fff #fff #a0a0a0; text-align: center; font-size: 12px; line-height: 12px; }
.cell.long { width: 98px; }
</style>
